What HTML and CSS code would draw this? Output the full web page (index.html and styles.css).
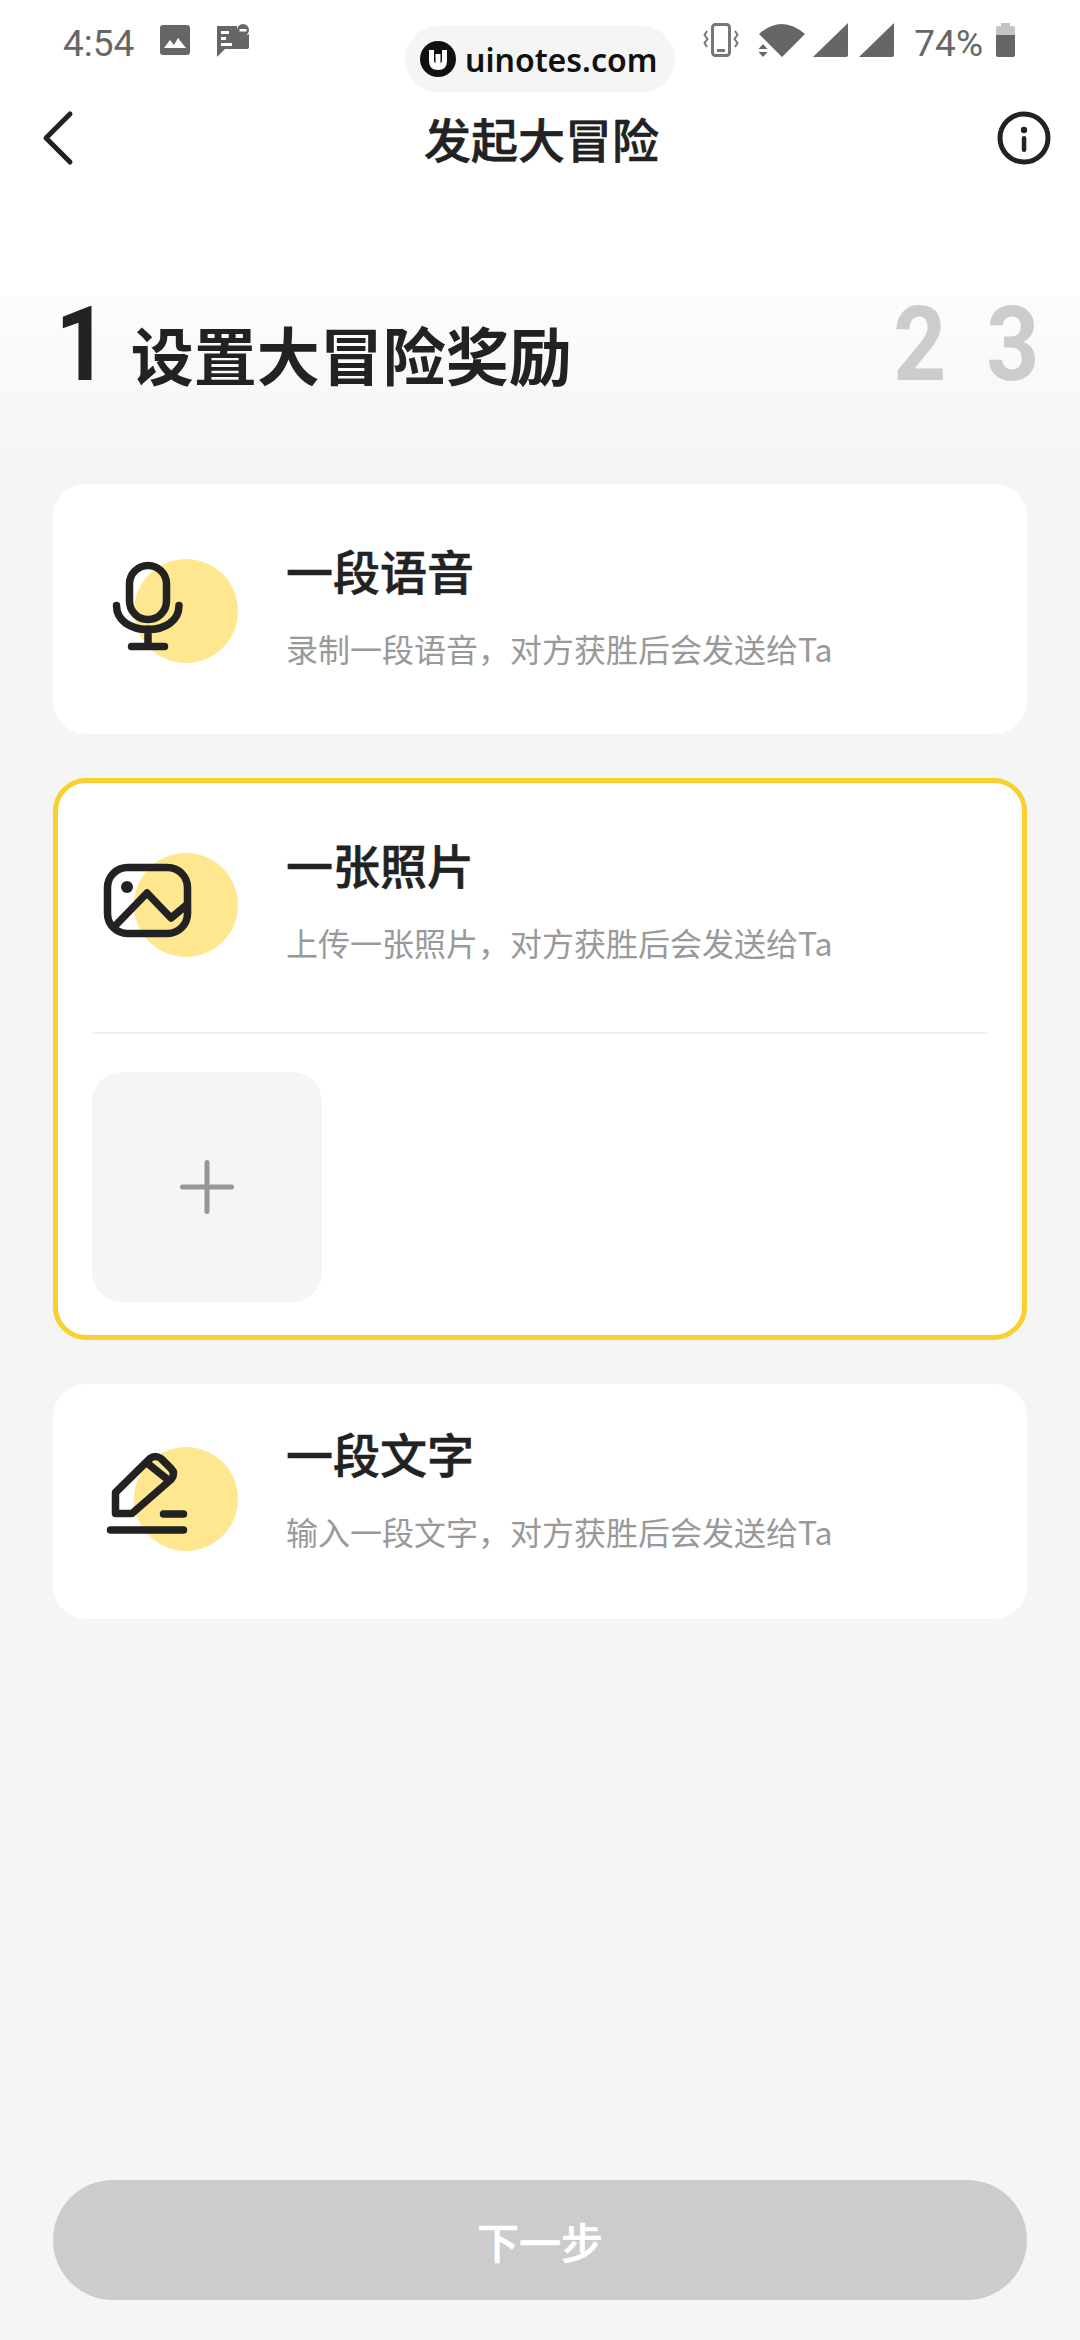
FILE: index.html
```html
<!DOCTYPE html>
<html lang="zh-CN">
<head>
    <meta charset="UTF-8">
    <meta name="viewport" content="width=device-width, initial-scale=1.0">
    <title>发起大冒险</title>
    <link rel="stylesheet" href="styles.css">
</head>
<body>
<div class="page">

    <!-- Status bar -->
    <div class="status-bar">
        <span class="status-time">4:54</span>
        <svg class="status-icon" width="30" height="30" viewBox="0 0 30 30">
            <rect width="30" height="30" rx="3" fill="#666"/>
            <path d="M4 23l6-8 4 5 4-7 8 10z" fill="#fff"/>
        </svg>
        <svg class="status-icon msg-icon" width="34" height="34" viewBox="0 0 34 34">
            <path d="M1 2h20a8 8 0 0 0 12 8v13a2 2 0 0 1-2 2H9l-8 8z" fill="#666"/>
            <path d="M5 7h8v3H5zM5 13h5v3H5zM5 19h11v3H5z" fill="#fff"/>
            <circle cx="27" cy="6" r="6" fill="#666"/>
            <rect x="23.500" y="5" width="7" height="2.500" fill="#fff"/>
        </svg>
        <div class="status-right">
            <svg width="36" height="34" viewBox="0 0 36 34">
                <rect x="9.500" y="1.500" width="17" height="31" rx="3" fill="none" stroke="#777" stroke-width="3"/>
                <rect x="14" y="26" width="8" height="3" fill="#777"/>
                <path d="M4 8L1.500 12l3 4-3 4 2.500 4M32 8l2.500 4-3 4 3 4-2.500 4" fill="none" stroke="#777" stroke-width="2"/>
            </svg>
            <svg class="wifi" width="47" height="34" viewBox="0 0 47 34">
                <path d="M1 11Q23.500-9 47 11L24 34z" fill="#666"/>
                <path d="M5 21l4.500 5h-9zM5 34l4.500-5h-9z" fill="#666"/>
            </svg>
            <svg class="signal" width="35" height="34" viewBox="0 0 35 34">
                <path d="M35 0v32a2 2 0 0 1-2 2H0z" fill="#666"/>
            </svg>
            <svg class="signal" width="35" height="34" viewBox="0 0 35 34">
                <path d="M35 0v32a2 2 0 0 1-2 2H0z" fill="#666"/>
            </svg>
            <span class="status-battery">74%</span>
            <svg width="19" height="34" viewBox="0 0 19 34">
                <path d="M5 0h9v3h3a2 2 0 0 1 2 2v7H0V5a2 2 0 0 1 2-2h3z" fill="#c4c4c4"/>
                <path d="M0 12h19v20a2 2 0 0 1-2 2H2a2 2 0 0 1-2-2z" fill="#666"/>
            </svg>
        </div>
    </div>

    <!-- Watermark -->
    <div class="watermark">
        <svg width="36" height="36" viewBox="0 0 36 36">
            <circle cx="18" cy="18" r="18" fill="#111"/>
            <path d="M9 9h5v10q0 3 1.500 3V13h5v9q1.500 0 1.500-3V9h5v11q0 9-9 9t-9-9z" fill="#fff"/>
        </svg>
        <span>uinotes.com</span>
    </div>

    <!-- Nav -->
    <header class="nav">
        <svg width="34" height="56" viewBox="0 0 34 56">
            <path d="M30 4L6 28l24 24" fill="none" stroke="#222" stroke-width="5" stroke-linecap="round" stroke-linejoin="round"/>
        </svg>
        <h1>发起大冒险</h1>
        <svg width="54" height="54" viewBox="0 0 54 54">
            <circle cx="27" cy="27" r="24" fill="none" stroke="#222" stroke-width="5"/>
            <circle cx="27" cy="19" r="3.200" fill="#222"/>
            <rect x="24.800" y="25" width="4.500" height="16" rx="2.200" fill="#222"/>
        </svg>
    </header>

    <!-- Steps -->
    <div class="steps">
        <span class="step-num">1</span>
        <h2>设置大冒险奖励</h2>
        <span class="step-num step-off">2</span>
        <span class="step-num step-off step-last">3</span>
    </div>

    <main class="cards">
        <section class="card card-voice">
            <div class="card-row">
                <svg width="140" height="112" viewBox="0 0 140 112">
                    <circle cx="86" cy="56" r="52" fill="#ffe78f"/>
                    <rect x="29.500" y="10.500" width="37" height="54" rx="18.500" fill="none" stroke="#222" stroke-width="7.500"/>
                    <path d="M16.500 50.500c0 15 14 24 31.500 24s31-9 31-24M48 74v17M31.500 91.500h33" fill="none" stroke="#222" stroke-width="7.500" stroke-linecap="round"/>
                </svg>
                <div class="card-text">
                    <h3>一段语音</h3>
                    <p>录制一段语音，对方获胜后会发送给Ta</p>
                </div>
            </div>
        </section>

        <section class="card card-photo">
            <div class="card-row">
                <svg width="140" height="112" viewBox="0 0 140 112">
                    <circle cx="86" cy="56" r="52" fill="#ffe78f"/>
                    <rect x="7.500" y="18.500" width="80" height="66" rx="20" fill="none" stroke="#222" stroke-width="7.500"/>
                    <circle cx="27" cy="38" r="6" fill="#222"/>
                    <path d="M13 79l34-35 24 25 18-15" fill="none" stroke="#222" stroke-width="7.500" stroke-linejoin="round"/>
                </svg>
                <div class="card-text">
                    <h3>一张照片</h3>
                    <p>上传一张照片，对方获胜后会发送给Ta</p>
                </div>
            </div>
            <div class="card-divider"></div>
            <div class="upload">
                <svg width="54" height="54" viewBox="0 0 54 54">
                    <path d="M27 2.500v49M2.500 27h49" stroke="#969693" stroke-width="5" stroke-linecap="round"/>
                </svg>
            </div>
        </section>

        <section class="card card-text-type">
            <div class="card-row">
                <svg width="140" height="112" viewBox="0 0 140 112">
                    <circle cx="86" cy="56" r="52" fill="#ffe78f"/>
                    <path d="M15.500 49.500L50 15.500q5-4 11 0l10 10q5 5 0 11L32 70.500H15.500z" fill="none" stroke="#222" stroke-width="7.500" stroke-linejoin="round"/>
                    <path d="M47 20l20 16" fill="none" stroke="#222" stroke-width="7.500"/>
                    <path d="M63.500 71h20M10.500 87h73" fill="none" stroke="#222" stroke-width="7.500" stroke-linecap="round"/>
                </svg>
                <div class="card-text">
                    <h3>一段文字</h3>
                    <p>输入一段文字，对方获胜后会发送给Ta</p>
                </div>
            </div>
        </section>
    </main>

    <button class="next-btn">下一步</button>
</div>
</body>
</html>
```

FILE: styles.css
```css
/* Basic reset */
* {
    margin: 0;
    padding: 0;
    box-sizing: border-box;
}

body {
    font-family: "Noto Sans CJK SC", sans-serif;
    color: #222;
}

.page {
    position: relative;
    width: 1080px;
    height: 2340px;
    display: flex;
    flex-direction: column;
    background: linear-gradient(#fff 296px, #fcfcfc 296px, #f5f5f5 470px);
    overflow: hidden;
}

/* Status bar */
.status-bar {
    display: flex;
    align-items: flex-start;
    height: 96px;
    padding: 23px 65px 0 63px;
    color: #666;
    font-family: Roboto, sans-serif;
    font-size: 37px;
    line-height: 36px;
}

.status-time {
    margin-top: 3px;
}

.status-icon {
    margin: 2px 0 0 26px;
}

.msg-icon {
    margin: 1px 0 0 26px;
}

.status-right {
    display: flex;
    align-items: flex-start;
    margin-left: auto;
}

.wifi {
    margin-left: 19px;
}

.signal {
    margin-left: 8px;
}

.signal + .signal {
    margin-left: 11px;
}

.status-battery {
    margin: 3px 13px 0 20px;
}

/* Watermark pill */
.watermark {
    position: absolute;
    left: 405px;
    top: 26px;
    width: 270px;
    height: 66px;
    display: flex;
    align-items: center;
    gap: 9px;
    padding-left: 15px;
    border-radius: 33px;
    background-color: #f5f5f5;
    color: #111;
    font-family: "Noto Sans", sans-serif;
    font-size: 32px;
    font-weight: 600;
}

/* Nav */
.nav {
    display: flex;
    align-items: center;
    justify-content: space-between;
    height: 84px;
    padding: 0 29px 0 40px;
}

.nav h1 {
    font-size: 47px;
    font-weight: 500;
    -webkit-text-stroke: 0.6px #222;
    line-height: 60px;
    margin-left: 12px;
}

/* Step title */
.steps {
    display: flex;
    align-items: baseline;
    height: 304px;
    padding: 112px 37px 0 52px;
}

.step-num {
    display: inline-block;
    font-family: Roboto, sans-serif;
    font-size: 104px;
    font-weight: 700;
    line-height: 106px;
    transform: scaleX(0.89);
}

.steps h2 {
    flex: 1;
    margin-left: 19px;
    font-size: 63px;
    font-weight: 700;
    line-height: 80px;
}

.step-off {
    color: #ccc;
}

.step-last {
    margin-left: 34px;
}

/* Cards */
.cards {
    display: flex;
    flex-direction: column;
    gap: 44px;
    padding: 0 53px;
}

.card {
    background-color: #fff;
    border-radius: 33px;
}

.card-row {
    display: flex;
    align-items: flex-start;
    padding-left: 47px;
}

.card-row svg {
    flex-shrink: 0;
}

.card-text {
    margin-left: 46px;
}

.card-text h3 {
    font-size: 47px;
    font-weight: 500;
    -webkit-text-stroke: 0.6px #222;
    line-height: 60px;
}

.card-text p {
    margin-top: 26px;
    color: #999;
    font-size: 32px;
    line-height: 44px;
}

.card-voice {
    height: 250px;
    padding-top: 71px;
}

.card-voice .card-text {
    margin-top: -15px;
}

.card-photo {
    height: 562px;
    border: 5px solid #f9d02f;
    padding-top: 66px;
}

.card-photo .card-row {
    padding-left: 42px;
}

.card-photo .card-text {
    margin-top: -15px;
}

.card-divider {
    height: 2px;
    margin: 68px 34px 0;
    background-color: #f0f0f0;
}

.upload {
    display: flex;
    align-items: center;
    justify-content: center;
    width: 230px;
    height: 230px;
    margin: 38px 0 0 34px;
    border-radius: 30px;
    background-color: #f5f5f5;
}

.card-text-type {
    height: 235px;
    padding-top: 59px;
}

.card-text-type .card-text {
    margin-top: -20px;
}

/* Next button */
.next-btn {
    margin: auto 53px 40px;
    height: 120px;
    border: none;
    border-radius: 60px;
    background-color: #ccc;
    color: #fff;
    font-family: "Noto Sans CJK SC", sans-serif;
    font-size: 42px;
    font-weight: 500;
    -webkit-text-stroke: 0.6px #fff;
}
```
